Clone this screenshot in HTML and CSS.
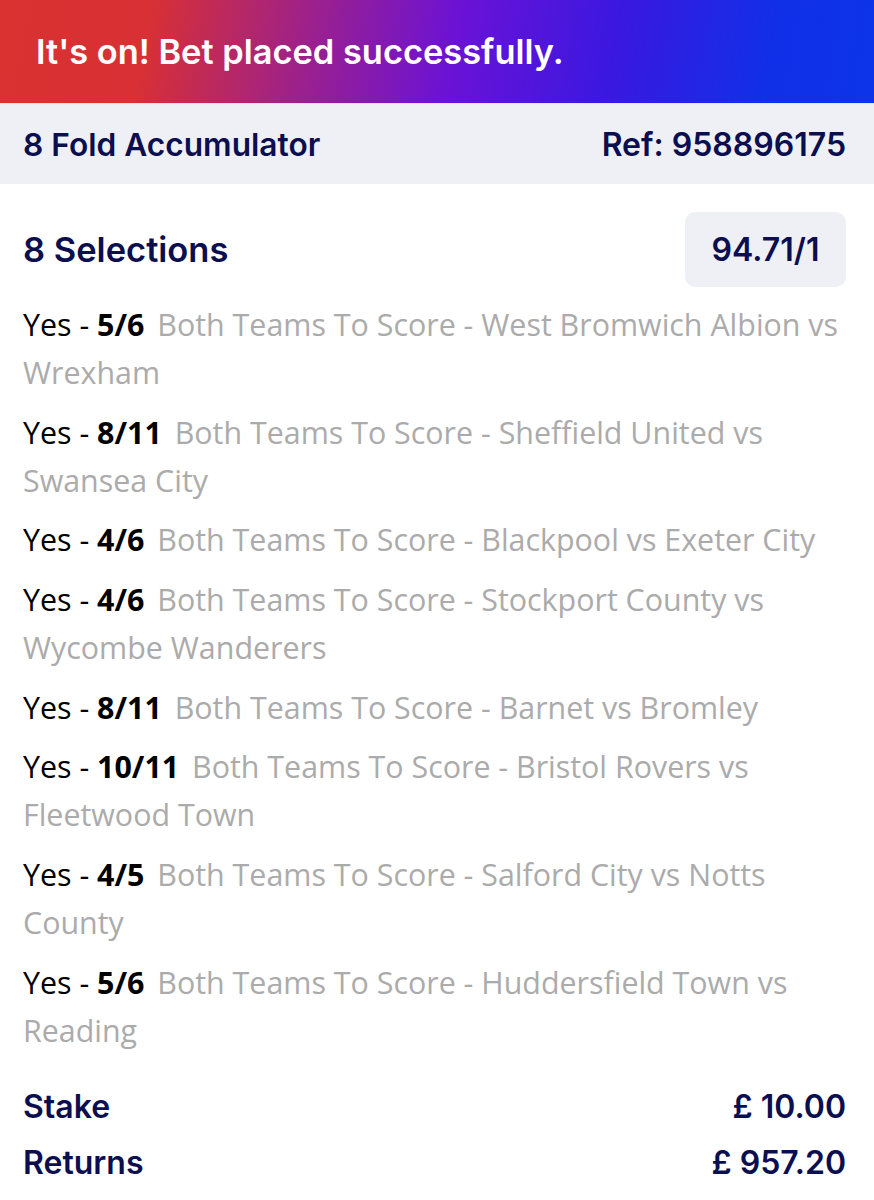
FILE: index.html
```html
<!DOCTYPE html>
<html>
<head>
<meta charset="utf-8">
<link rel="stylesheet" href="styles.css">
</head>
<body>
<div class="banner">It's on! Bet placed successfully.</div>
<div class="bar">
  <span>8 Fold Accumulator</span>
  <span>Ref: 958896175</span>
</div>
<div class="content">
  <div class="sel-head">
    <span class="sel-title">8 Selections</span>
    <span class="odds">94.71/1</span>
  </div>
  <ul class="list">
    <li><span class="yes">Yes - <b>5/6</b></span> <span class="desc">Both Teams To Score - West Bromwich Albion vs Wrexham</span></li>
    <li><span class="yes">Yes - <b>8/11</b></span> <span class="desc">Both Teams To Score - Sheffield United vs Swansea City</span></li>
    <li><span class="yes">Yes - <b>4/6</b></span> <span class="desc">Both Teams To Score - Blackpool vs Exeter City</span></li>
    <li><span class="yes">Yes - <b>4/6</b></span> <span class="desc">Both Teams To Score - Stockport County vs Wycombe Wanderers</span></li>
    <li><span class="yes">Yes - <b>8/11</b></span> <span class="desc">Both Teams To Score - Barnet vs Bromley</span></li>
    <li><span class="yes">Yes - <b>10/11</b></span> <span class="desc">Both Teams To Score - Bristol Rovers vs Fleetwood Town</span></li>
    <li><span class="yes">Yes - <b>4/5</b></span> <span class="desc">Both Teams To Score - Salford City vs Notts County</span></li>
    <li><span class="yes">Yes - <b>5/6</b></span> <span class="desc">Both Teams To Score - Huddersfield Town vs Reading</span></li>
  </ul>
  <div class="totals">
    <div class="row"><span>Stake</span><span>£ 10.00</span></div>
    <div class="row"><span>Returns</span><span>£ 957.20</span></div>
  </div>
</div>
</body>
</html>
```
FILE: styles.css
```css
html, body {
  margin: 0;
  padding: 0;
  background: #ffffff;
}
body {
  width: 874px;
  font-family: Inter, "Liberation Sans", sans-serif;
  color: #0b0e4f;
}
.banner {
  height: 103px;
  box-sizing: border-box;
  padding: 0 0 0 36px;
  display: flex;
  align-items: center;
  background: linear-gradient(100deg, #da3131 0%, #d83034 17%, #9a2090 36%, #6a12d6 52%, #3a18e0 70%, #1030e8 88%, #0c34e8 100%);
  color: #ffffff;
  font-size: 34.4px;
  font-weight: 600;
}
.bar {
  height: 81px;
  background: #eff0f5;
  display: flex;
  align-items: center;
  justify-content: space-between;
  padding: 0 28px 0 23px;
  font-size: 31.7px;
  font-weight: 600;
  border-top: 1px solid #e4e4ee;
  box-sizing: border-box;
}
.bar span:last-child {
  font-size: 32px;
}
.content {
  padding: 28px 28px 0 23px;
}
.sel-head {
  display: flex;
  align-items: center;
  justify-content: space-between;
  margin-bottom: 14px;
}
.sel-title {
  font-size: 34.5px;
  font-weight: 600;
}
.odds {
  width: 161px;
  height: 75px;
  border-radius: 10px;
  background: #eef0f5;
  display: flex;
  align-items: center;
  justify-content: center;
  font-size: 32px;
  font-weight: 600;
}
.list {
  list-style: none;
  margin: 0;
  padding: 0;
  font-family: "Open Sans", "Liberation Sans", sans-serif;
  font-size: 30.4px;
  line-height: 48px;
}
.list li {
  margin-bottom: 11.7px;
}
.yes {
  color: #000000;
}
.yes b {
  font-weight: 700;
}
.desc {
  color: #ababab;
  margin-left: 5px;
}
.totals {
  margin-top: 24px;
}
.row {
  display: flex;
  justify-content: space-between;
  font-size: 32px;
  font-weight: 600;
  height: 56px;
  align-items: center;
}
```
